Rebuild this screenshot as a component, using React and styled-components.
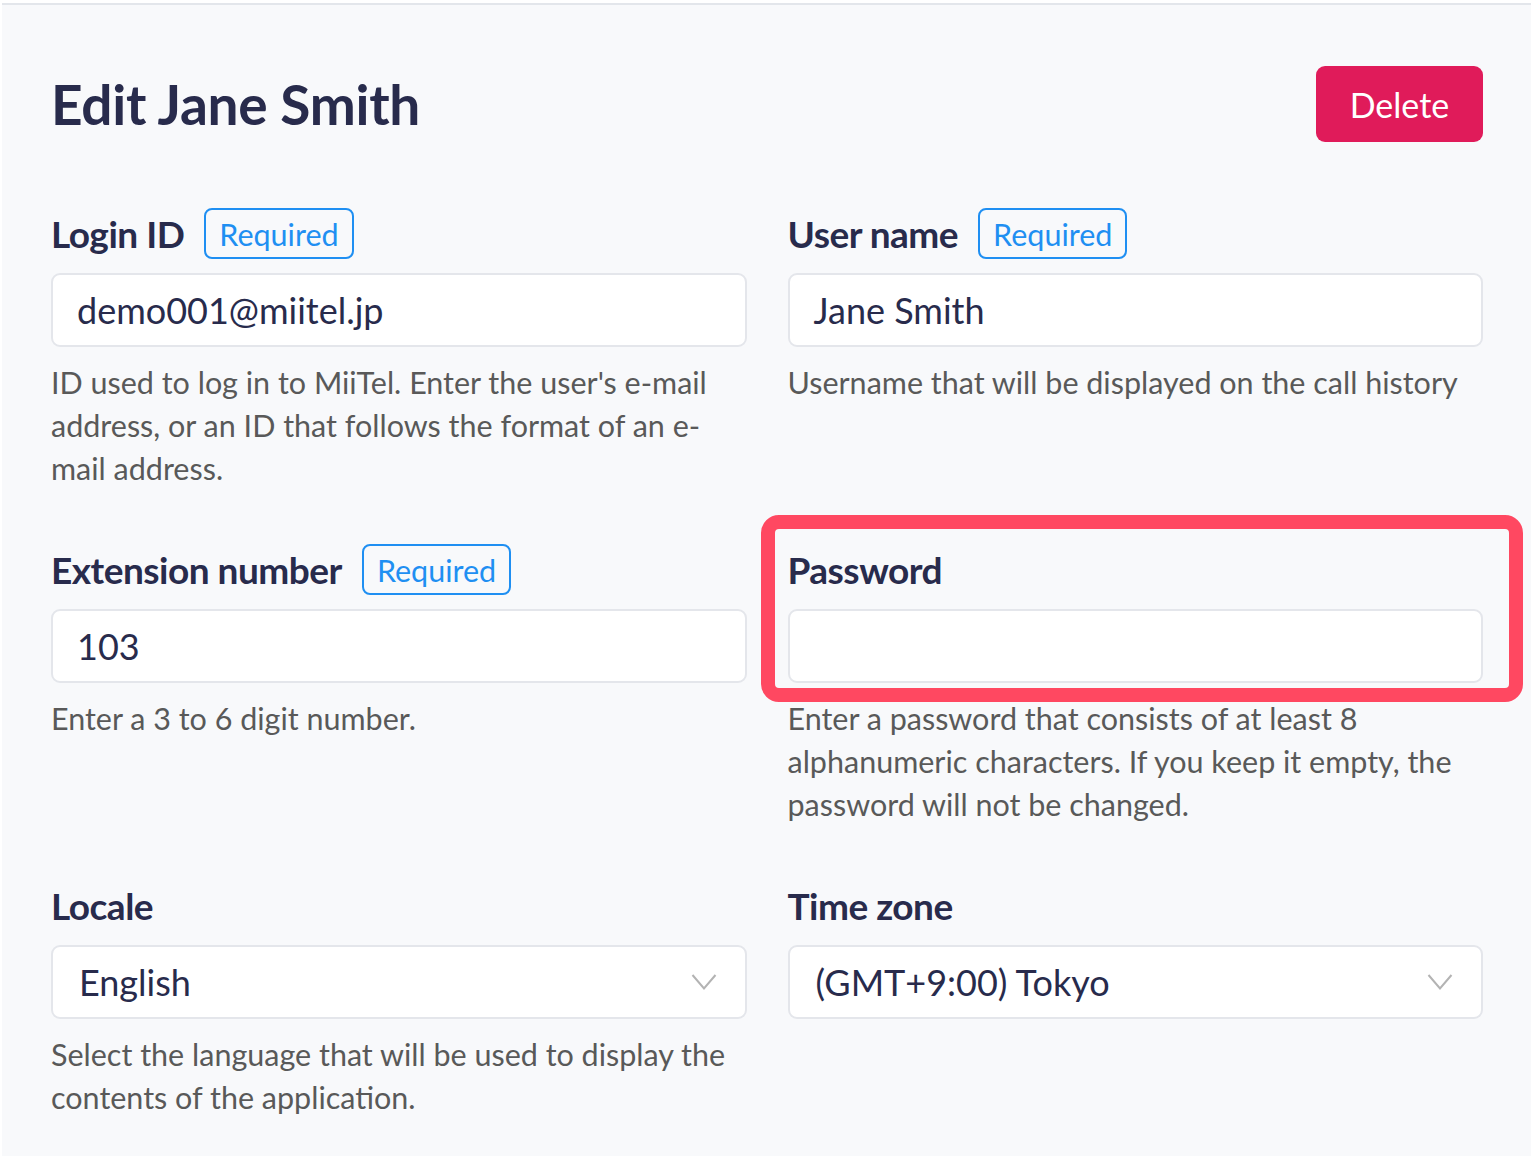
import React from "react";
import styled, { createGlobalStyle } from "styled-components";

const Global = createGlobalStyle`
  html, body { margin: 0; padding: 0; background: #ffffff; }
  body { font-family: "Lato", "Open Sans", sans-serif; -webkit-font-smoothing: antialiased; }
  * { box-sizing: border-box; }
`;

const Card = styled.div`
  margin: 3px 4px 0 2px;
  height: 1153px;
  background: #f8f9fb;
  border-top: 2px solid #e3e6eb;
  padding: 61px 48px 0 49px;
`;

const Header = styled.div`
  display: flex;
  align-items: center;
  justify-content: space-between;
  height: 76px;
  margin-bottom: 66px;
`;

const Title = styled.h1`
  margin: 0;
  font-size: 55px;
  font-weight: 700;
  color: #282b4c;
  letter-spacing: -0.3px;
`;

const DangerButton = styled.button`
  height: 76px;
  width: 167px;
  border: none;
  border-radius: 9px;
  background: #e01b5a;
  color: #ffffff;
  font-family: inherit;
  font-size: 34px;
  font-weight: 400;
  cursor: pointer;
`;

const Grid = styled.div`
  display: grid;
  grid-template-columns: 1fr 1fr;
  column-gap: 41px;
  row-gap: 54px;
`;

const Field = styled.div`
  display: flex;
  flex-direction: column;
  min-width: 0;
`;

const Group = styled.div`
  position: relative;
  display: flex;
  flex-direction: column;
  gap: 14px;
`;

const LabelRow = styled.div`
  display: flex;
  align-items: center;
  gap: 20px;
  height: 51px;
`;

const Label = styled.label`
  font-size: 37px;
  font-weight: 700;
  color: #282b4c;
  letter-spacing: -0.5px;
`;

const Badge = styled.span`
  display: inline-flex;
  align-items: center;
  height: 51px;
  padding: 0 13px;
  border: 2px solid #1f8ff2;
  border-radius: 8px;
  color: #1f8ff2;
  font-size: 30.5px;
  font-weight: 400;
`;

const Control = styled.div`
  position: relative;
  display: flex;
  align-items: center;
  height: 74px;
  padding: 0 ${(p) => (p.$select ? "28px 0 26px" : "24px")};
  background: #ffffff;
  border: 2px solid #e4e6eb;
  border-radius: 9px;
  font-size: 36px;
  color: #282b4c;
  justify-content: space-between;
`;

const Help = styled.p`
  margin: 14px 0 0;
  font-size: 30.5px;
  line-height: 43px;
  color: #595959;
`;

const Highlight = styled.div`
  position: absolute;
  top: -29px;
  left: -27px;
  right: -40px;
  bottom: -19px;
  border: 14px solid #ff4861;
  border-radius: 18px;
  pointer-events: none;
`;

const Chevron = () => (
  <svg width="26" height="18" viewBox="0 0 26 18" fill="none">
    <path d="M1.5 2 L13 15.5 L24.5 2" stroke="#b3b3b3" strokeWidth="2" fill="none" />
  </svg>
);

const fields = [
  {
    label: "Login ID",
    required: true,
    value: "demo001@miitel.jp",
    help: "ID used to log in to MiiTel. Enter the user's e-mail address, or an ID that follows the format of an e-mail address.",
  },
  {
    label: "User name",
    required: true,
    value: "Jane Smith",
    help: "Username that will be displayed on the call history",
  },
  {
    label: "Extension number",
    required: true,
    value: "103",
    help: "Enter a 3 to 6 digit number.",
  },
  {
    label: "Password",
    value: "",
    highlight: true,
    help: "Enter a password that consists of at least 8 alphanumeric characters. If you keep it empty, the password will not be changed.",
  },
  {
    label: "Locale",
    value: "English",
    select: true,
    help: "Select the language that will be used to display the contents of the application.",
  },
  {
    label: "Time zone",
    value: "(GMT+9:00) Tokyo",
    select: true,
    help: "",
  },
];

export default function App() {
  return (
    <>
      <Global />
      <Card>
        <Header>
          <Title>Edit Jane Smith</Title>
          <DangerButton>Delete</DangerButton>
        </Header>
        <Grid>
          {fields.map((f) => (
            <Field key={f.label}>
              <Group>
                <LabelRow>
                  <Label>{f.label}</Label>
                  {f.required && <Badge>Required</Badge>}
                </LabelRow>
                <Control $select={f.select}>
                  <span>{f.value}</span>
                  {f.select && <Chevron />}
                </Control>
                {f.highlight && <Highlight />}
              </Group>
              {f.help && <Help>{f.help}</Help>}
            </Field>
          ))}
        </Grid>
      </Card>
    </>
  );
}
